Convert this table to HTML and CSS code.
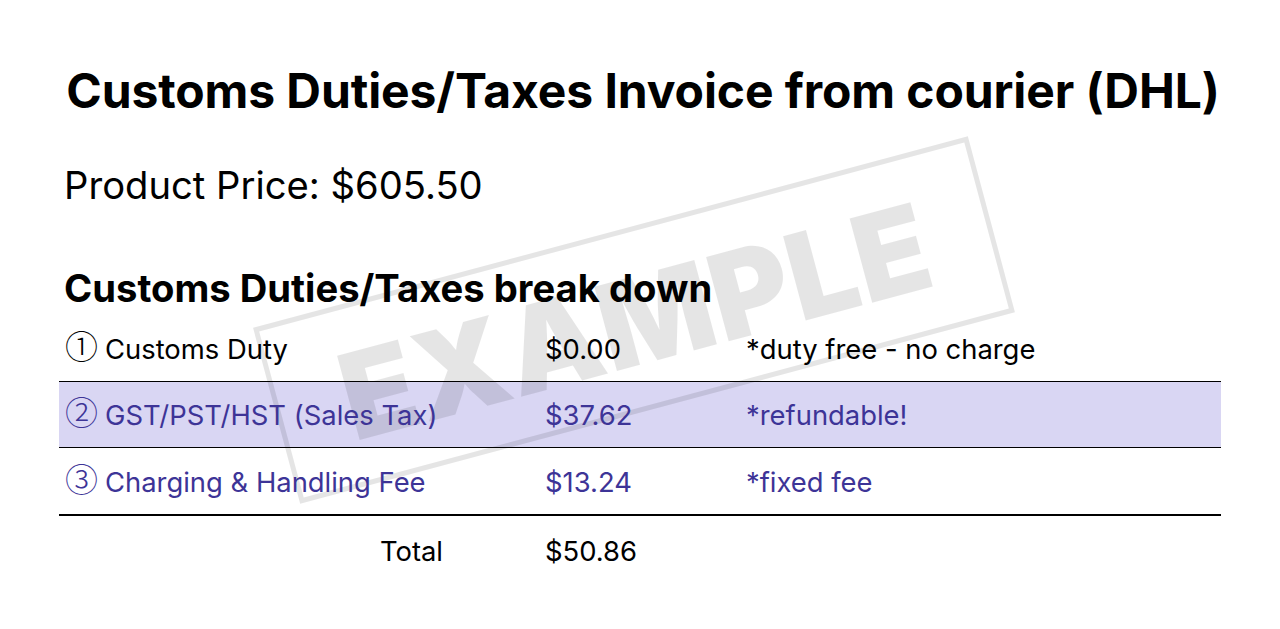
FILE: index.html
```html
<!DOCTYPE html>
<html lang="en">
<head>
<meta charset="utf-8">
<title>Customs Duties/Taxes Invoice</title>
<link rel="stylesheet" href="styles.css">
</head>
<body>
<main class="sheet">
  <h1 class="title">Customs Duties/Taxes Invoice from courier (DHL)</h1>
  <p class="price">Product Price: $605.50</p>
  <h2 class="sub">Customs Duties/Taxes break down</h2>
  <div class="table">
    <div class="row">
      <div class="cell c1"><span class="num">①</span>Customs Duty</div>
      <div class="cell c2">$0.00</div>
      <div class="cell c3">*duty free - no charge</div>
    </div>
    <div class="row row-hl purple">
      <div class="cell c1"><span class="num">②</span>GST/PST/HST (Sales Tax)</div>
      <div class="cell c2">$37.62</div>
      <div class="cell c3">*refundable!</div>
    </div>
    <div class="row row-last purple">
      <div class="cell c1"><span class="num">③</span>Charging &amp; Handling Fee</div>
      <div class="cell c2">$13.24</div>
      <div class="cell c3">*fixed fee</div>
    </div>
    <div class="row row-total">
      <div class="cell c1 total-label">Total</div>
      <div class="cell c2">$50.86</div>
      <div class="cell c3"></div>
    </div>
  </div>
  <div class="stamp" aria-hidden="true"><span class="stamp-text">EXAMPLE</span></div>
</main>
</body>
</html>
```

FILE: styles.css
```css
* { box-sizing: border-box; }
html, body { margin: 0; padding: 0; background: #fff; }
body {
  font-family: "Inter", "Lato", "Noto Sans", sans-serif;
  font-variant-ligatures: none;
  font-feature-settings: "liga" 0, "calt" 0;
  color: #000;
  width: 1280px;
  height: 629px;
  overflow: hidden;
}
.sheet {
  position: relative;
  padding: 62px 59px 0 59px;
  height: 629px;
}
.title, .price, .sub, .cell {
  position: relative;
  z-index: 1;
}
.title {
  margin: 0;
  font-size: 48px;
  line-height: 1.2;
  font-weight: 700;
  text-align: center;
  letter-spacing: -0.1px;
  padding-left: 6px;
}
.price {
  margin: 43px 0 0 5px;
  font-size: 38.2px;
  line-height: 1.2;
  font-weight: 400;
}
.sub {
  margin: 58px 0 0 5px;
  font-size: 38.2px;
  line-height: 1.2;
  font-weight: 700;
}
.table {
  margin-top: 4px;
  font-size: 27.4px;
  line-height: 1.2;
}
.row {
  display: grid;
  grid-template-columns: 486px 201px 1fr;
  height: 66px;
  padding-top: 17px;
  border-bottom: 1px solid #000;
}
.row-hl { background: #d9d6f3; }
.row-last { border-bottom: 2px solid #000; height: 68px; padding-top: 18px; }
.row-total { border-bottom: none; padding-top: 19px; }
.purple { color: #3d3497; }
.c1 { padding-left: 6px; }
.num {
  font-family: "Noto Sans CJK JP", "DejaVu Sans", sans-serif;
  font-size: 33px;
  line-height: 0;
  font-weight: 300;
  margin-right: 7px;
  vertical-align: baseline;
}
.total-label { text-align: right; padding-right: 102px; }
.stamp {
  position: absolute;
  z-index: 0;
  left: 264px;
  top: 229px;
  width: 740px;
  height: 182px;
  border: 5px solid rgba(0, 0, 0, 0.1);
  transform: rotate(-15deg);
  display: flex;
  align-items: center;
  justify-content: center;
  pointer-events: none;
}
.stamp-text {
  font-family: "Inter", sans-serif;
  font-weight: 900;
  font-size: 120px;
  line-height: 1;
  color: rgba(0, 0, 0, 0.1);
  letter-spacing: 1px;
  padding-top: 4px;
  padding-left: 2px;
}
```
